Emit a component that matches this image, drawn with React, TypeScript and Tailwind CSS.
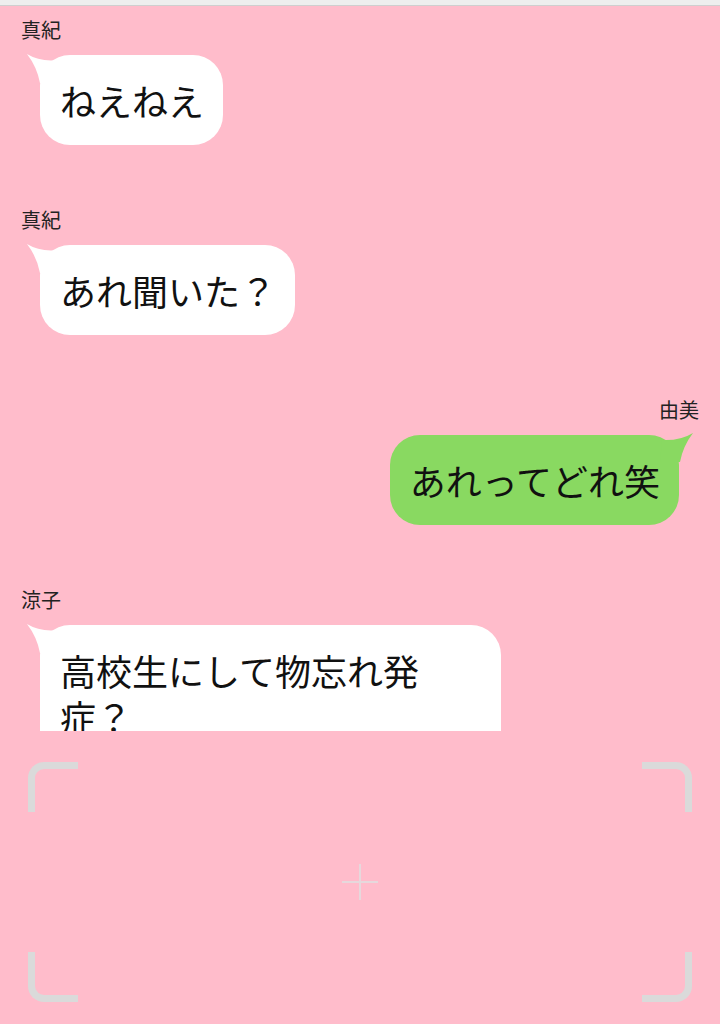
import React from "react";

type Message = {
  id: number;
  name: string;
  text: string;
  mine?: boolean;
  wide?: boolean;
};

const MESSAGES: Message[] = [
  { id: 1, name: "真紀", text: "ねえねえ" },
  { id: 2, name: "真紀", text: "あれ聞いた？" },
  { id: 3, name: "由美", text: "あれってどれ笑", mine: true },
  { id: 4, name: "涼子", text: "高校生にして物忘れ発症？", wide: true },
];

const FONT = "font-['Noto_Sans_CJK_JP','Noto_Sans',sans-serif]";

function LeftTail() {
  return (
    <svg
      className="absolute left-[-14px] top-[-2px]"
      width="36"
      height="32"
      viewBox="0 0 36 32"
    >
      <path d="M1 1 Q 14 9 32 7 L 34 30 L 14 30 Q 11 14 1 1 Z" fill="#ffffff" />
    </svg>
  );
}

function RightTail() {
  return (
    <svg
      className="absolute right-[-15px] top-[-3px]"
      width="36"
      height="32"
      viewBox="0 0 36 32"
    >
      <path d="M35 1 Q 22 9 4 8 L 2 30 L 22 30 Q 25 14 35 1 Z" fill="#89d961" />
    </svg>
  );
}

function Bubble({ msg }: { msg: Message }) {
  return (
    <div className={msg.mine ? "flex flex-col items-end pr-[21px]" : "flex flex-col items-start pl-[21px]"}>
      <div className="text-[20px] leading-[24px] text-[#222]">{msg.name}</div>
      <div className={msg.mine ? "mt-[13px] mr-[20px]" : "mt-[13px] ml-[19px]"}>
        <div
          className={
            "relative rounded-[30px] pl-[20px] pr-[19px] py-[22px] text-[36px] leading-[46px] text-[#111] " +
            (msg.mine ? "bg-[#89d961]" : "bg-white") +
            (msg.wide ? " w-[461px] rounded-b-none" : "")
          }
        >
          {msg.mine ? <RightTail /> : <LeftTail />}
          <div className={msg.wide ? "relative max-w-[380px]" : "relative whitespace-nowrap"}>{msg.text}</div>
        </div>
      </div>
    </div>
  );
}

function Corner({ pos }: { pos: "tl" | "tr" | "bl" | "br" }) {
  const cls = {
    tl: "border-l-[7px] border-t-[7px] rounded-tl-[16px]",
    tr: "border-r-[7px] border-t-[7px] rounded-tr-[16px]",
    bl: "border-l-[7px] border-b-[7px] rounded-bl-[16px]",
    br: "border-r-[7px] border-b-[7px] rounded-br-[16px]",
  }[pos];
  return <div className={"h-[50px] w-[50px] border-[#dadada] " + cls} />;
}

export default function App() {
  return (
    <div className={"flex h-[1024px] w-[720px] flex-col bg-[#ffbccb] " + FONT}>
      <div className="h-[6px] shrink-0 border-b border-[#cfcfcf] bg-[#eeeeee]" />

      <div className="flex h-[725px] shrink-0 flex-col gap-[63px] overflow-hidden pt-[12px]">
        {MESSAGES.map((m) => (
          <Bubble key={m.id} msg={m} />
        ))}
      </div>

      <div className="flex flex-1 flex-col px-[28px] pt-[31px] pb-[22px]">
        <div className="flex justify-between">
          <Corner pos="tl" />
          <Corner pos="tr" />
        </div>
        <div className="flex flex-1 items-center justify-center">
          <div className="relative h-[36px] w-[36px]">
            <div className="absolute left-[17px] top-0 h-[36px] w-[2px] bg-[#e6d8dc]" />
            <div className="absolute left-0 top-[17px] h-[2px] w-[36px] bg-[#e6d8dc]" />
          </div>
        </div>
        <div className="flex justify-between">
          <Corner pos="bl" />
          <Corner pos="br" />
        </div>
      </div>
    </div>
  );
}
